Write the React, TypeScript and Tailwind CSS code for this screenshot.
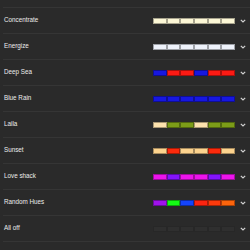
import React from "react";

type Row = { name: string; colors: string[]; off?: boolean };

const C = "#fcf7d6";
const W = "#eef2fb";
const B = "#1717e0";
const R = "#fc1a14";
const P = "#fde2ae";
const G = "#7c9c18";
const S = "#fcd38e";
const SR = "#fc2a0c";
const M = "#ec14ec";
const V = "#8414fc";

const rows: Row[] = [
  { name: "Concentrate", colors: [C, C, C, C, C, C] },
  { name: "Energize", colors: [W, W, W, W, W, W] },
  { name: "Deep Sea", colors: [B, R, R, B, R, R] },
  { name: "Blue Rain", colors: [B, B, B, B, B, B] },
  { name: "Laila", colors: [P, G, G, P, G, G] },
  { name: "Sunset", colors: [S, SR, S, S, SR, S] },
  { name: "Love shack", colors: [M, V, M, M, V, M] },
  { name: "Random Hues", colors: ["#a012ec", "#14fc14", "#1444fc", "#fc2410", "#fc3a0c", "#fc640c"] },
  { name: "All off", colors: ["#2f2f2f", "#2f2f2f", "#2f2f2f", "#2f2f2f", "#2f2f2f", "#2f2f2f"], off: true },
];

function Chevron() {
  return (
    <svg width="6" height="4" viewBox="0 0 6 4" className="shrink-0">
      <path d="M0.8 0.9 L3 3 L5.2 0.9" fill="none" stroke="#d0d0d0" strokeWidth="1.2" />
    </svg>
  );
}

export default function App() {
  return (
    <div
      className="w-[250px] h-[250px] overflow-hidden bg-[#2a2a2a]"
      style={{ fontFamily: '"Liberation Sans", Arial, sans-serif' }}
    >
      <div className="h-[8px] ml-[3px] border-b border-[#353535]" />
      {rows.map((r) => (
        <div key={r.name} className="ml-[3px] h-[26px] border-b border-[#353535] flex items-center pl-[1px] pr-[4px]">
          <span className="text-[6.3px] leading-none text-[#ececec]">{r.name}</span>
          <div className="ml-auto flex w-[82px] h-[6px]">
            {r.colors.map((c, i) => (
              <div
                key={i}
                className={
                  r.off
                    ? "flex-1 border border-[#272727]"
                    : "flex-1 border border-[#00000055]"
                }
                style={{ backgroundColor: c }}
              />
            ))}
          </div>
          <div className="ml-[5px]">
            <Chevron />
          </div>
        </div>
      ))}
    </div>
  );
}
